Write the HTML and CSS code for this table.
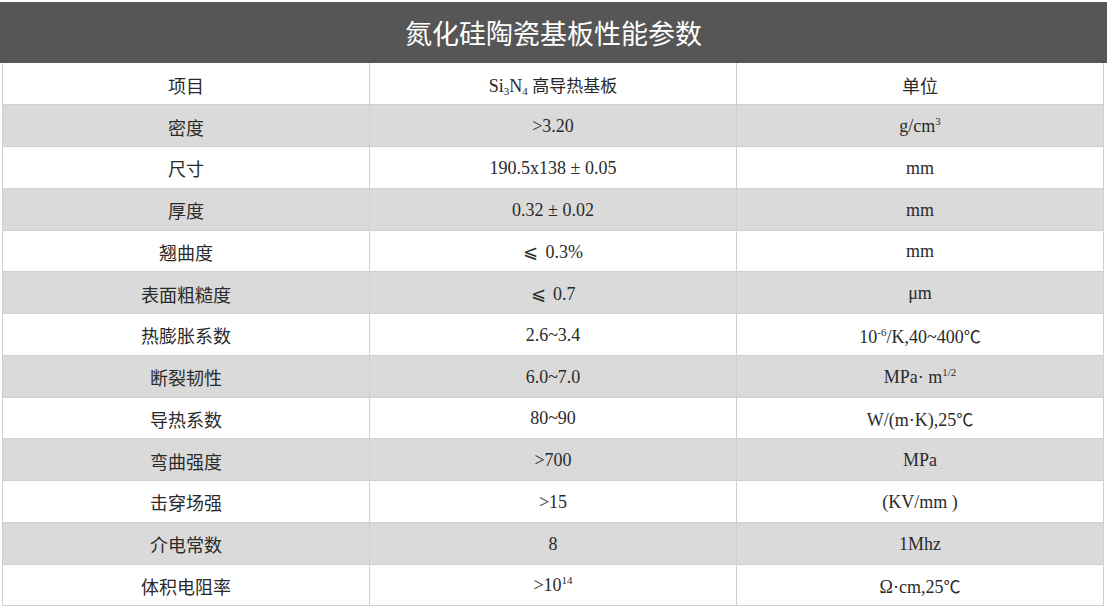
FILE: index.html
```html
<!DOCTYPE html>
<html lang="zh-CN">
<head>
<meta charset="utf-8">
<title>氮化硅陶瓷基板性能参数</title>
<link rel="stylesheet" href="styles.css">
</head>
<body>
<div class="title">氮化硅陶瓷基板性能参数</div>
<table class="spec">
  <tr><td class="name">项目</td><td class="val">Si<sub>3</sub>N<sub>4</sub> <span class="cjk">高导热基板</span></td><td class="unit name">单位</td></tr>
  <tr class="alt"><td class="name">密度</td><td class="val">&gt;3.20</td><td class="val">g/cm<sup>3</sup></td></tr>
  <tr><td class="name">尺寸</td><td class="val">190.5x138 ± 0.05</td><td class="val">mm</td></tr>
  <tr class="alt"><td class="name">厚度</td><td class="val">0.32 ± 0.02</td><td class="val">mm</td></tr>
  <tr><td class="name">翘曲度</td><td class="val"><span class="le">⩽</span> 0.3%</td><td class="val">mm</td></tr>
  <tr class="alt"><td class="name">表面粗糙度</td><td class="val"><span class="le">⩽</span> 0.7</td><td class="val">μm</td></tr>
  <tr><td class="name">热膨胀系数</td><td class="val">2.6~3.4</td><td class="val">10<sup>-6</sup>/K,40~400<span class="cel">℃</span></td></tr>
  <tr class="alt"><td class="name">断裂韧性</td><td class="val">6.0~7.0</td><td class="val">MPa· m<sup>1/2</sup></td></tr>
  <tr><td class="name">导热系数</td><td class="val">80~90</td><td class="val">W/(m·K),25<span class="cel">℃</span></td></tr>
  <tr class="alt"><td class="name">弯曲强度</td><td class="val">&gt;700</td><td class="val">MPa</td></tr>
  <tr><td class="name">击穿场强</td><td class="val">&gt;15</td><td class="val">(KV/mm )</td></tr>
  <tr class="alt"><td class="name">介电常数</td><td class="val">8</td><td class="val">1Mhz</td></tr>
  <tr><td class="name">体积电阻率</td><td class="val">&gt;10<sup>14</sup></td><td class="val">Ω·cm,25<span class="cel">℃</span></td></tr>
</table>
</body>
</html>
```
FILE: styles.css
```css
html, body {
  margin: 0;
  padding: 0;
  background: #ffffff;
}
.title {
  margin-top: 2px;
  height: 61px;
  background: #565656;
  color: #ffffff;
  font-family: "Noto Sans CJK SC", "Noto Sans", sans-serif;
  font-size: 27px;
  line-height: 61px;
  text-align: center;
}
.spec {
  margin-left: 2px;
  width: 1102px;
  border-collapse: collapse;
  table-layout: fixed;
  color: #2a2a2a;
}
.spec td {
  border: 1px solid #d0d0d0;
  border-top: none;
  height: 41.75px;
  padding: 2px 0 0 0;
  box-sizing: border-box;
  text-align: center;
  vertical-align: middle;
  width: 33.33%;
}
.spec tr:not(:first-child) td {
  border-top: 1px solid #cfcfcf;
}
.spec tr.alt td {
  background: #dadada;
}
.name {
  font-family: "Noto Sans CJK SC", "Noto Sans", sans-serif;
  font-size: 18px;
}
.val {
  font-family: "Liberation Serif", "Noto Sans CJK SC", serif;
  font-size: 18px;
}
.cjk {
  font-family: "Noto Sans CJK SC", sans-serif;
  font-size: 17px;
}
.le {
  font-family: "DejaVu Serif", serif;
  font-size: 18px;
  margin-right: 3px;
}
.cel {
  font-family: "Noto Sans CJK SC", sans-serif;
  font-size: 17px;
}
sup, sub {
  font-size: 11px;
  line-height: 0;
}
sup {
  vertical-align: 7px;
}
sub {
  vertical-align: -3px;
}
```
